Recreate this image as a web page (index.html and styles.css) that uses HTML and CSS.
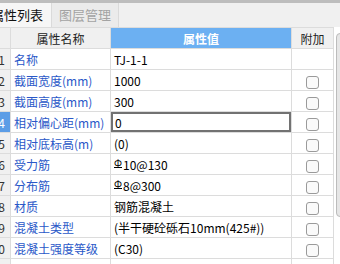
FILE: index.html
```html
<!DOCTYPE html>
<html lang="zh">
<head>
    <meta charset="UTF-8" />
    <title>属性列表</title>
    <link rel="stylesheet" href="styles.css">
</head>
<body>
    <div class="panel">
        <div class="tabs">
            <div class="tab active">属性列表</div>
            <div class="tab">图层管理</div>
        </div>
        <div class="grid-wrap">
            <table class="props">
                <colgroup>
                    <col class="c-num"><col class="c-name"><col class="c-val"><col class="c-add">
                </colgroup>
                <thead>
                    <tr>
                        <th class="num"></th>
                        <th>属性名称</th>
                        <th class="val-head">属性值</th>
                        <th>附加</th>
                    </tr>
                </thead>
                <tbody>
                    <tr><td class="num">1</td><td class="name">名称</td><td>TJ-1-1</td><td></td></tr>
                    <tr><td class="num">2</td><td class="name">截面宽度(mm)</td><td>1000</td><td><span class="chk"></span></td></tr>
                    <tr><td class="num">3</td><td class="name">截面高度(mm)</td><td>300</td><td><span class="chk"></span></td></tr>
                    <tr class="current"><td class="num">4</td><td class="name">相对偏心距(mm)</td><td class="editing">0</td><td><span class="chk"></span></td></tr>
                    <tr><td class="num">5</td><td class="name">相对底标高(m)</td><td>(0)</td><td><span class="chk"></span></td></tr>
                    <tr><td class="num">6</td><td class="name">受力筋</td><td><span class="bar">Φ</span>10@130</td><td><span class="chk"></span></td></tr>
                    <tr><td class="num">7</td><td class="name">分布筋</td><td><span class="bar">Φ</span>8@300</td><td><span class="chk"></span></td></tr>
                    <tr><td class="num">8</td><td class="name">材质</td><td>钢筋混凝土</td><td><span class="chk"></span></td></tr>
                    <tr><td class="num">9</td><td class="name">混凝土类型</td><td>(半干硬砼砾石10mm(425#))</td><td><span class="chk"></span></td></tr>
                    <tr><td class="num">10</td><td class="name">混凝土强度等级</td><td>(C30)</td><td><span class="chk"></span></td></tr>
                    <tr><td class="num">11</td><td class="name">混凝土外加剂</td><td>(无)</td><td><span class="chk"></span></td></tr>
                </tbody>
            </table>
            <div class="scroll">
                <div class="thumb"></div>
            </div>
        </div>
    </div>
</body>
</html>
```

FILE: styles.css
```css
body {
    margin: 0;
    width: 340px;
    height: 264px;
    overflow: hidden;
    background-color: #ffffff;
    font-family: "Noto Sans CJK SC", "Microsoft YaHei", sans-serif;
    font-size: 12px;
    color: #000;
}

.panel {
    margin-left: -10px;
    width: 356px;
}

/* вкладки сверху */
.tabs {
    display: flex;
    height: 24px;
    border-top: 3px solid #bdbdbd;
    background-color: #f0f0f0;
}

.tab {
    padding: 0 7px;
    line-height: 24px;
    font-size: 13px;
    color: #a3a3a3;
    background-color: #ebebeb;
    border-right: 1px solid #dadada;
}

.tab.active {
    color: #111;
    background-color: #f6f6f6;
    padding-left: 1px;
    padding-right: 8px;
}

.grid-wrap {
    display: flex;
}

.props {
    border-collapse: collapse;
    table-layout: fixed;
    width: 323px;
}

.c-num { width: 20px; }
.c-name { width: 100px; }
.c-val { width: 181px; }
.c-add { width: 42px; }

.props th,
.props td {
    height: 20px;
    padding: 0;
    border: 1px solid #dcdcdc;
    white-space: nowrap;
    overflow: hidden;
}

.props th {
    font-weight: normal;
    background-color: #f0f0f0;
    color: #222;
    font-size: 12px;
}

.props th.val-head {
    background-color: #6cb0f2;
    color: #fff;
    font-weight: bold;
}

.props td {
    padding-left: 3px;
}

.props td.num {
    padding: 0 5px 0 0;
    text-align: right;
    background-color: #f0f0f0;
    color: #333;
    font-size: 12px;
}

.props tr.current td.num {
    background-color: #5c9de6;
    color: #fff;
}

.props td.name {
    color: #2a58c8;
    padding-left: 3px;
}

.props td.editing {
    box-shadow: inset 0 0 0 2px #727272;
    padding-left: 4px;
}

.props td:last-child {
    text-align: center;
    padding: 0;
}

.chk {
    display: inline-block;
    width: 11px;
    height: 11px;
    border: 1px solid #9a9a9a;
    border-radius: 3px;
    background-color: #fafafa;
    vertical-align: middle;
}

.bar {
    display: inline-block;
    font-size: 10px;
    line-height: 8px;
    border-bottom: 1px solid #000;
    vertical-align: 3px;
    margin-right: 1px;
}

/* полоса прокрутки */
.scroll {
    width: 23px;
    padding-top: 6px;
    padding-left: 2px;
    background-color: #fff;
}

.thumb {
    width: 14px;
    height: 182px;
    background-color: #e6e6e6;
    border: 1px solid #bcbcbc;
    border-radius: 4px;
}
```
